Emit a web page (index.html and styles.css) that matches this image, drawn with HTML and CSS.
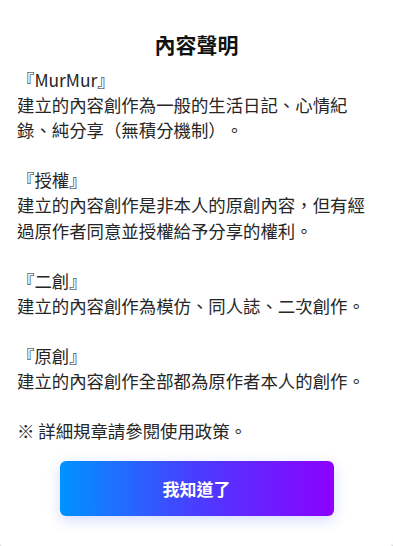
FILE: index.html
```html
<!DOCTYPE html>
<html lang="zh-Hant-TW">
<head>
<meta charset="utf-8">
<title>內容聲明</title>
<link rel="stylesheet" href="styles.css">
</head>
<body>
<div class="modal">
  <h1 class="title">內容聲明</h1>
  <div class="content">
    <p class="section">『MurMur』<br>建立的內容創作為一般的生活日記、心情紀錄、純分享（無積分機制）。</p>
    <p class="section">『授權』<br>建立的內容創作是非本人的原創內容，但有經過原作者同意並授權給予分享的權利。</p>
    <p class="section">『二創』<br>建立的內容創作為模仿、同人誌、二次創作。</p>
    <p class="section">『原創』<br>建立的內容創作全部都為原作者本人的創作。</p>
    <p class="note">※ 詳細規章請參閱使用政策。</p>
  </div>
  <button class="confirm" type="button">我知道了</button>
</div>
</body>
</html>
```

FILE: styles.css
```css
html, body {
  margin: 0;
  padding: 0;
  background: #d9d9d9;
}

.modal {
  width: 393px;
  height: 546px;
  box-sizing: border-box;
  background: #ffffff;
  border-radius: 0 0 3px 3px;
  padding: 30px 17px 0;
  display: flex;
  flex-direction: column;
  font-family: "Noto Sans CJK TC", "Noto Sans", sans-serif;
  color: #1e1e1e;
  text-spacing-trim: space-all;
}

.title {
  margin: 0;
  font-size: 21px;
  line-height: 28px;
  font-weight: 700;
  text-align: center;
  color: #111;
}

.content {
  margin-top: 9px;
  font-size: 17.4px;
  line-height: 25.1px;
  font-weight: 400;
  color: #262626;
}

.section {
  margin: 0 0 25.1px;
}

.note {
  margin: 0;
}

.confirm {
  align-self: center;
  margin-top: 18px;
  width: 274px;
  height: 55px;
  border: none;
  border-radius: 6px;
  background: linear-gradient(90deg, #0093ff 0%, #4a3cff 50%, #8c00ff 100%);
  box-shadow: 0 4px 14px rgba(60, 90, 255, 0.22);
  color: #ffffff;
  font-family: "Noto Sans CJK TC", "Noto Sans", sans-serif;
  font-size: 17px;
  font-weight: 700;
  padding: 0;
}
```
